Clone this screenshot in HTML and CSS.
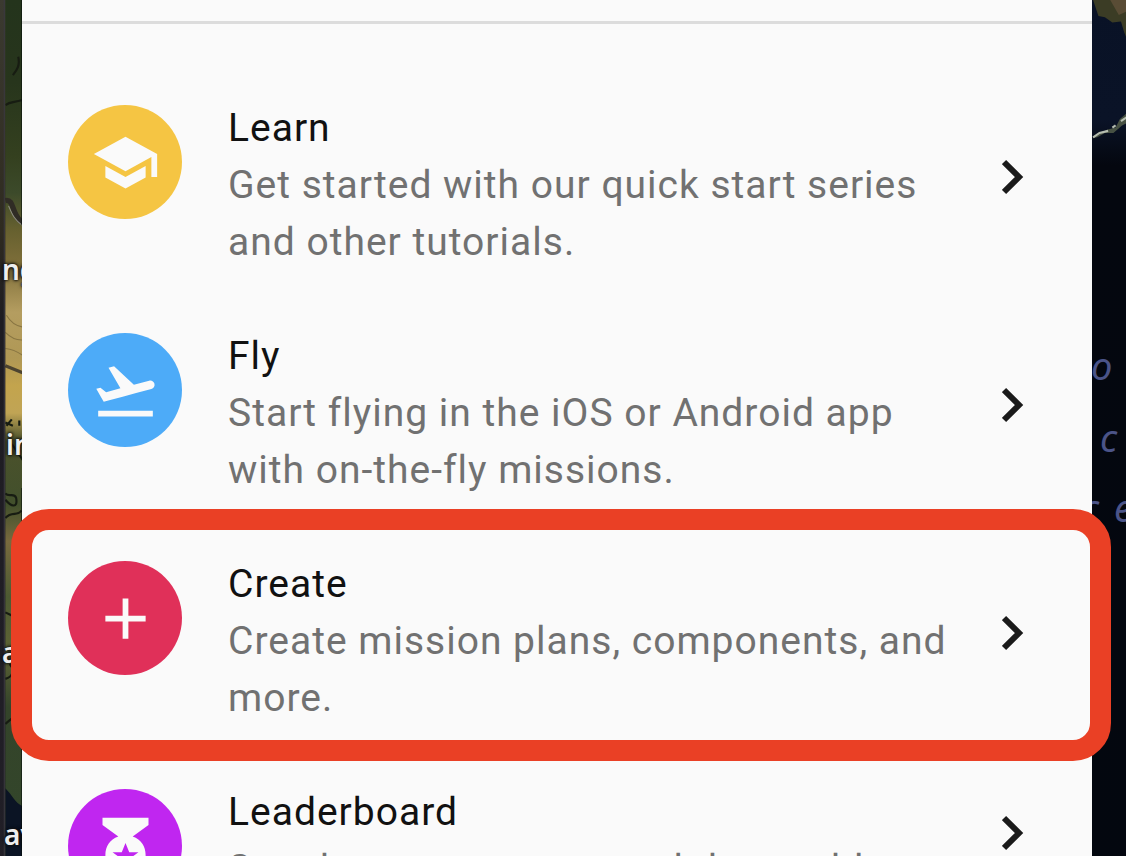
FILE: index.html
```
<!DOCTYPE html>
<html lang="en">
<head>
<meta charset="utf-8">
<meta name="viewport" content="width=device-width, initial-scale=1">
<title>Get started</title>
<link rel="stylesheet" href="styles.css">
</head>
<body>
<div class="screen">
  <div class="map map-land" aria-hidden="true">
    <svg class="terrain" viewBox="0 0 22 856" preserveAspectRatio="xMinYMin slice">
      <defs>
        <linearGradient id="land" x1="0" y1="0" x2="0" y2="1">
          <stop offset="0" stop-color="#24341c"/>
          <stop offset=".09" stop-color="#27351c"/>
          <stop offset=".17" stop-color="#34401f"/>
          <stop offset=".21" stop-color="#3c4a2a"/>
          <stop offset=".25" stop-color="#66602f"/>
          <stop offset=".29" stop-color="#7f6f3a"/>
          <stop offset=".34" stop-color="#b49d60"/>
          <stop offset=".39" stop-color="#b09855"/>
          <stop offset=".42" stop-color="#c3a44d"/>
          <stop offset=".45" stop-color="#c0a455"/>
          <stop offset=".48" stop-color="#4b512b"/>
          <stop offset=".55" stop-color="#42502c"/>
          <stop offset=".59" stop-color="#786a3e"/>
          <stop offset=".65" stop-color="#4d5a32"/>
          <stop offset=".71" stop-color="#5e6335"/>
          <stop offset=".77" stop-color="#34442a"/>
          <stop offset="1" stop-color="#32472b"/>
        </linearGradient>
        <linearGradient id="edge" x1="0" y1="0" x2="0" y2="1">
          <stop offset="0" stop-color="#3b3a30"/>
          <stop offset=".25" stop-color="#2f2b20"/>
          <stop offset=".35" stop-color="#1e1c22"/>
          <stop offset="1" stop-color="#211f27"/>
        </linearGradient>
      </defs>
      <rect width="22" height="856" fill="url(#land)"/>
      <path d="M5 735C12 742 15 750 22 752V826C14 824 9 811 5 800Z" fill="#0b1424"/>
      <g fill="none" stroke="#171c12" stroke-width="2">
        <path d="M5 98C10 94 13 96 22 93M12 70C15 66 19 62 17 53"/>
        <path d="M5 394L12 397M6 397L11 391M18 397V392M11 414L22 430"/>
        <path d="M5 466C10 472 17 475 15 464C13 459 8 464 5 460M5 483C11 476 16 482 20 476"/>
        <path d="M5 571L11 574M5 633C12 631 14 625 9 619M5 675C9 671 13 669 22 661M5 815L12 822"/>
      </g>
      <path d="M5 187C14 185 10 202 22 208" fill="none" stroke="#302c25" stroke-width="5"/>
      <path d="M8 192C11 199 13 205 22 211" fill="none" stroke="#8e8d82"/>
      <path d="M5 341L22 348" stroke="#4c4330" stroke-width="3"/>
      <path d="M6 294Q12 304 22 305M5 310Q13 318 22 317M5 325Q14 326 22 332" fill="none" stroke="#887542"/>
      <path d="M21 0V210M21 455V856" stroke="#07100a" stroke-width="2"/>
      <rect width="5" height="856" fill="url(#edge)"/>
      <path d="M4 0V856" stroke="#3b3840"/>
    </svg>
    <span class="place place-a">ng</span>
    <span class="place place-b">in</span>
    <span class="place place-c">a</span>
    <span class="place place-d">av</span>
  </div>

  <main class="panel">
    <ul class="menu">
      <li>
        <a class="item" href="#learn">
          <span class="badge badge-learn">
            <svg class="icon" viewBox="0 0 24 24"><path d="M5 13.180v4L12 21l7-3.820v-4L12 17l-7-3.820zM12 3L1 9l11 6 9-4.910V17h2V9L12 3z"/></svg>
          </span>
          <span class="copy"><span class="title">Learn</span><span class="desc">Get started with our quick start series and other tutorials.</span></span>
          <svg class="chevron" viewBox="0 0 22 36"><path d="M2 3L17 18L2 33"/></svg>
        </a>
      </li>
      <li>
        <a class="item" href="#fly">
          <span class="badge badge-fly">
            <svg class="icon" viewBox="0 0 24 24"><path d="M2.500 19h19v2h-19zM22.070 9.640c-.21-.8-1.040-1.280-1.840-1.060L14.920 10l-6.900-6.430-1.930.51 4.140 7.170-4.970 1.330-1.970-1.540-1.450.39 1.820 3.160.77 1.330 1.600-.43 5.310-1.420 4.350-1.160L21 11.490c.81-.23 1.280-1.050 1.070-1.850z"/></svg>
          </span>
          <span class="copy"><span class="title">Fly</span><span class="desc">Start flying in the iOS or Android app with on-the-fly missions.</span></span>
          <svg class="chevron" viewBox="0 0 22 36"><path d="M2 3L17 18L2 33"/></svg>
        </a>
      </li>
      <li class="highlighted">
        <a class="item" href="#create">
          <span class="badge badge-create">
            <svg class="icon" viewBox="0 0 24 24"><path d="M19 13h-6v6h-2v-6H5v-2h6V5h2v6h6v2z"/></svg>
          </span>
          <span class="copy"><span class="title">Create</span><span class="desc">Create mission plans, components, and more.</span></span>
          <svg class="chevron" viewBox="0 0 22 36"><path d="M2 3L17 18L2 33"/></svg>
        </a>
      </li>
      <li>
        <a class="item" href="#leaderboard">
          <span class="badge badge-leader">
            <svg class="icon" viewBox="0 0 24 24"><path fill-rule="evenodd" d="M4 2H20V4.500L14.500 8.500C17.500 9.500 19 12 19 15A7 7 0 0 1 5 15C5 12 6.500 9.500 9.500 8.500L4 4.500ZM12 10.800L10.700 14H7.500L10.200 16L9.200 19.300L12 17.300L14.800 19.300L13.800 16L16.500 14H13.300Z"/></svg>
          </span>
          <span class="copy"><span class="title">Leaderboard</span><span class="desc">See the top users around the world.</span></span>
          <svg class="chevron" viewBox="0 0 22 36"><path d="M2 3L17 18L2 33"/></svg>
        </a>
      </li>
    </ul>
  </main>

  <div class="map map-sea" aria-hidden="true">
    <svg class="terrain" viewBox="0 0 34 856" preserveAspectRatio="xMinYMin slice">
      <defs>
        <linearGradient id="sea" x1="0" y1="0" x2="0" y2="1">
          <stop offset="0" stop-color="#091226"/>
          <stop offset=".13" stop-color="#0a1327"/>
          <stop offset=".18" stop-color="#04070f"/>
          <stop offset="1" stop-color="#03070f"/>
        </linearGradient>
      </defs>
      <rect width="34" height="856" fill="url(#sea)"/>
      <path d="M1 0H34V40L30 30L27 20L19 21L12 16L6 15Z" fill="#3b3c25"/>
      <path d="M17 0H34V10L25 14Z" fill="#594c35"/>
      <path d="M0 129L7 125L14 121L22 119L26 111L34 104V114L28 117L20 124L12 124L5 128Z" fill="#475143"/>
      <path d="M1 128L7 124L15 122M19 119L22 117M27 113L33 109" fill="none" stroke="#b5bdb0" stroke-width="2"/>
    </svg>
    <span class="ocean ocean-a">o</span>
    <span class="ocean ocean-b">c</span>
    <span class="ocean ocean-c">c</span>
    <span class="ocean ocean-d">e</span>
  </div>
</div>
</body>
</html>
```
FILE: styles.css
```
* { box-sizing: border-box; }

body {
  margin: 0;
  background: #03070f;
  font-family: Roboto, "Liberation Sans", sans-serif;
}

.screen {
  display: grid;
  grid-template-columns: 22px 1fr 34px;
  height: 100vh;
  overflow: hidden;
}

.map {
  position: relative;
  overflow: hidden;
}

.terrain {
  display: block;
  width: 100%;
  height: 100%;
}

.place {
  position: absolute;
  left: 2px;
  color: #eee;
  font: 600 28px/32px "Noto Sans", sans-serif;
  text-shadow: 0 0 2px #111, 0 0 3px #111, 0 0 4px #111;
}
.place-a { top: 253px; }
.place-b { top: 428px; left: 6px; }
.place-c { top: 636px; }
.place-d { top: 818px; left: 4px; }

.ocean {
  position: absolute;
  color: #4b5488;
  font: italic 38px/40px "Noto Sans", sans-serif;
}
.ocean-a { top: 345px; left: -1px; }
.ocean-b { top: 417px; left: 8px; }
.ocean-c { top: 487px; left: -10px; }
.ocean-d { top: 487px; left: 22px; }

.panel {
  z-index: 1;
  padding-top: 21px;
  background: #fafafa;
  color: #111;
}

.menu {
  margin: 0;
  padding: 39px 0 0;
  border-top: 3px solid #dcdcdc;
  list-style: none;
}

.item {
  display: flex;
  align-items: center;
  gap: 46px;
  padding: 37px 68px 20px 46px;
  color: inherit;
  text-decoration: none;
}

.badge {
  display: flex;
  flex: none;
  align-items: center;
  justify-content: center;
  align-self: flex-start;
  width: 114px;
  height: 114px;
  margin-top: 5px;
  margin-bottom: -5px;
  border-radius: 50%;
}
.badge-learn { background: #f5c543; }
.badge-fly { background: #4dabf8; }
.badge-create { background: #e03059; }
.badge-leader { background: #c026f0; }

.icon {
  width: 69px;
  height: 69px;
  fill: #fafafa;
}

.copy {
  flex: 1;
  font-size: 39px;
  line-height: 57px;
  letter-spacing: 1px;
}

.title,
.desc { display: block; }
.desc { color: #717171; }

.chevron {
  flex: none;
  width: 22px;
  height: 36px;
  margin-top: -17px;
  fill: none;
  stroke: #1a1a1a;
  stroke-width: 6;
}

.highlighted { position: relative; }
.highlighted::after {
  content: "";
  position: absolute;
  inset: -10px -19px -14px -11px;
  border: 21px solid #ea4025;
  border-radius: 38px;
  pointer-events: none;
}
```
